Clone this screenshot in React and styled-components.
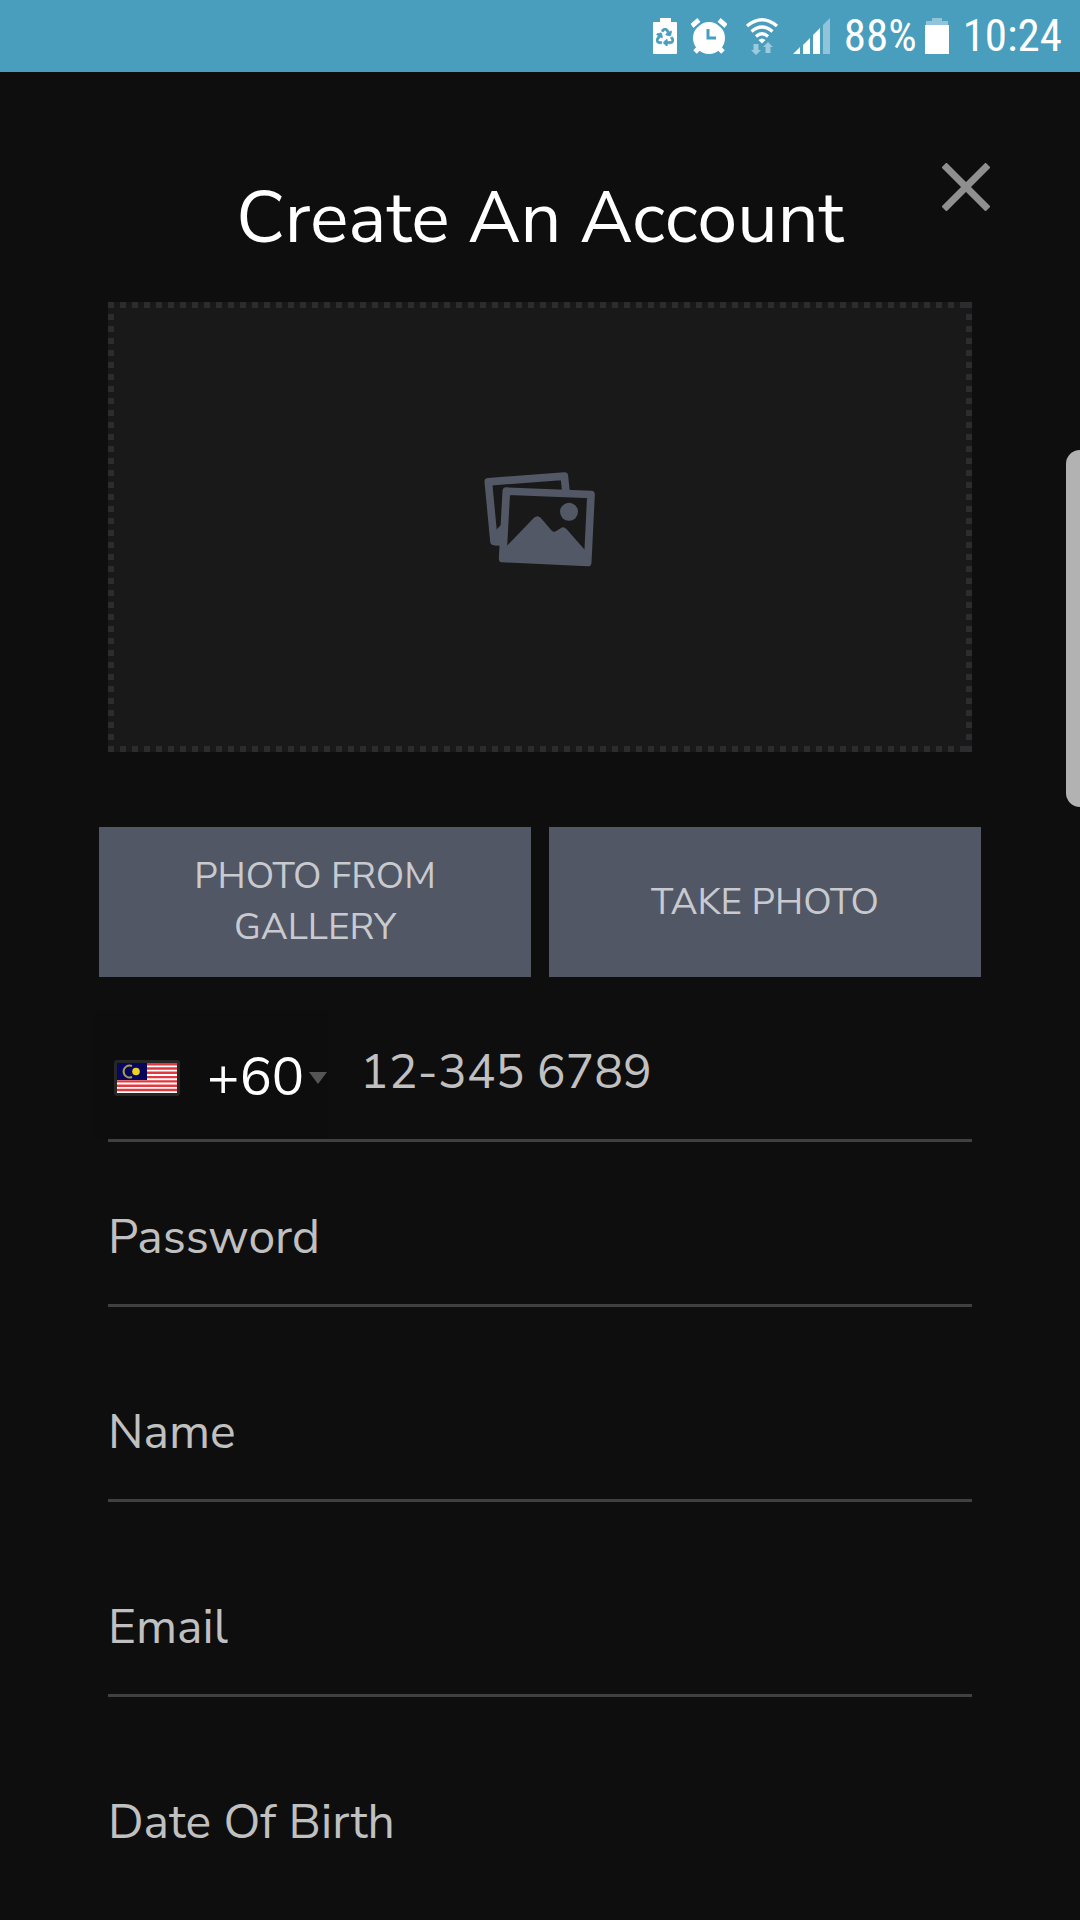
import React from 'react'
import styled, { createGlobalStyle } from 'styled-components';
import { FaRecycle } from 'react-icons/fa';

const GlobalStyle = createGlobalStyle`
    * {
        box-sizing: border-box;
    }
    body {
        margin: 0;
        background: #0e0e0e;
        font-family: 'Nunito Sans', Nunito, Lato, sans-serif;
    }
`
const Screen = styled.div`
    position: relative;
    min-height: 100vh;
    overflow: hidden;
`;
const StatusBar = styled.div`
    display: flex;
    justify-content: flex-end;
    align-items: center;
    gap: 14px;
    height: 72px;
    padding: 0 18px;
    background: #499dbd;
    color: white;
    font-family: 'Roboto Condensed', Roboto, sans-serif;
    font-size: 45px;
    line-height: 76px;
`;
const Level = styled.div`
    display: flex;
    align-items: center;
    gap: 8px;
`;
const Header = styled.header`
    display: grid;
    grid-template-columns: 1fr auto 1fr;
    align-items: start;
    padding: 91px 90px 40px;
`;
const Title = styled.h1`
    grid-column: 2;
    margin: 11px 0 0;
    color: white;
    font-size: 72px;
    font-weight: 400;
    line-height: 88px;
`;
const Close = styled.button`
    display: flex;
    justify-self: end;
    padding: 0;
    border: none;
    background: none;
    color: #8f8f8f;
`;
const Content = styled.form`
    padding: 0 108px;
`;
const Preview = styled.div`
    --dots: #2c2c2e 0 6px, transparent 6px 12px;
    display: flex;
    justify-content: center;
    align-items: center;
    height: 450px;
    padding-bottom: 16px;
    background:
        repeating-linear-gradient(90deg, var(--dots)) top / 100% 6px no-repeat,
        repeating-linear-gradient(90deg, var(--dots)) bottom / 100% 6px no-repeat,
        repeating-linear-gradient(var(--dots)) left / 6px 100% no-repeat,
        repeating-linear-gradient(var(--dots)) right / 6px 100% no-repeat,
        #191919;
`;
const Buttons = styled.div`
    display: grid;
    grid-template-columns: 1fr 1fr;
    gap: 18px;
    margin: 75px -9px 0;
`;
const PhotoButton = styled.button`
    height: 150px;
    padding: 0 72px;
    border: none;
    background: #515764;
    color: #c8cad0;
    font-family: inherit;
    font-size: 37px;
    line-height: 51px;
    text-transform: uppercase;
`;
const Field = styled.div`
    display: flex;
    align-items: flex-end;
    height: ${props => props.$short ? '165px' : '195px'};
    border-bottom: 3px solid ${props => props.$open ? 'transparent' : '#404040'};
`;
const Input = styled.input`
    flex: 1;
    min-width: 0;
    height: 100px;
    padding: 0 0 34px;
    border: none;
    outline: none;
    background: none;
    color: #c0c0c0;
    font-family: inherit;
    font-size: 48px;
    &::placeholder {
        color: #c0c0c0;
        opacity: 1;
    }
`;
const Country = styled.div`
    display: flex;
    align-items: center;
    width: 233px;
    height: 129px;
    margin: 0 32px 0 -13px;
    padding: 6px 0 0 19px;
    background: #0d0d0d;
`;
const Code = styled.select`
    appearance: none;
    width: 102px;
    margin-left: 27px;
    padding: 0 0 2px;
    border: none;
    outline: none;
    background: none;
    color: white;
    font-family: inherit;
    font-size: 54px;
`;
const EdgePanel = styled.div`
    position: absolute;
    top: 450px;
    right: 0;
    width: 14px;
    height: 357px;
    border-radius: 18px 0 0 18px;
    background: #b3b2b2;
`;

function RecycleBattery() {
    return (
        <svg width="24" height="36" viewBox="0 0 24 36">
            <path fill="#fff" d="M7 0h11v4h5q1 0 1 1v30q0 1-1 1H1q-1 0-1-1V5q0-1 1-1h6z" />
            <FaRecycle x="3" y="10" size={18} color="#499dbd" stroke="#499dbd" strokeWidth="20" />
        </svg>
    )
}

function Alarm() {
    return (
        <svg width="36" height="36" viewBox="0 0 36 36">
            <path stroke="#fff" strokeWidth="5" d="M1 8l7-6M28 2l7 6M4 34l6-6M32 34l-6-6" />
            <circle cx="18" cy="20" r="16" fill="#fff" />
            <path stroke="#499dbd" strokeWidth="2" d="M3 11l9-8M33 11l-9-8" />
            <path fill="none" stroke="#499dbd" strokeWidth="3" d="M17 11v9h8" />
        </svg>
    )
}

function Wifi() {
    return (
        <svg width="38" height="37" viewBox="-5 0 38 37">
            <g fill="none" stroke="#fff" strokeWidth="3.2">
                <path d="M1 8Q16-4.500 31 8" />
                <path d="M5.500 13.500Q16 4.500 26.500 13.500" />
                <path d="M10 18.500Q16 13 22 18.500" />
            </g>
            <path fill="#fff" d="M12.500 22q3.500-3 7 0L16 25.500z" />
            <path fill="#9ccbde" d="M7.500 26h5v6H15l-5 5-5-5h2.500zM19.500 35h5v-6H27l-5-5-5 5h2.500z" />
        </svg>
    )
}

function Signal() {
    return (
        <svg width="37" height="36" viewBox="0 0 37 36">
            <path fill="#fff" d="M0 36l7-7v7zM10 27l7-7v16h-7zM20 17l7-7v26h-7z" />
            <path fill="#91c4d8" d="M30 7l7-7v36h-7z" />
        </svg>
    )
}

function Battery() {
    return (
        <svg width="24" height="36" viewBox="0 0 24 36">
            <path fill="#91c4d8" d="M7 0h10v3h6v5H1V3h6z" />
            <path fill="#fff" d="M0 7h24v29H0z" />
        </svg>
    )
}

function Photos() {
    return (
        <svg width="112" height="97" viewBox="72 62 336 290">
            <g fill="none" stroke="#525866" strokeWidth="23" strokeLinejoin="round">
                <path d="M128 273H102L85 94L313 77L318 126" />
                <path d="M139 122L393 132L383 336L128 324z" />
            </g>
            <path fill="#525866" d="M104 243L130 216V285H104zM130 297L222 202Q232 192 242 202L274 239Q282 248 291 240L302 233Q311 227 320 236L386 311V340L128 328z" />
            <circle cx="327" cy="184" r="27" fill="#525866" />
        </svg>
    )
}

function Flag() {
    return (
        <svg width="66" height="36" viewBox="-3 -3 66 36">
            <rect x="-3" y="-3" width="66" height="36" rx="3" fill="#262626" />
            <rect width="60" height="30" fill="#fff" />
            <path stroke="#e03a40" strokeWidth="2.400" d="M0 1.200h60M0 5.500h60M0 9.800h60M0 14.100h60M0 18.400h60M0 22.700h60M0 27h60" />
            <rect width="30" height="17" fill="#06065c" />
            <path fill="none" stroke="#a99a4c" strokeWidth="2" d="M15 3A6 6 0 1 0 15 14" />
            <circle cx="19" cy="8.500" r="3.800" fill="#f0d020" />
        </svg>
    )
}

function App() {
    return (
        <Screen>
            <GlobalStyle />
            <StatusBar>
                <RecycleBattery />
                <Alarm />
                <Wifi />
                <Signal />
                <Level>88%<Battery /></Level>
                <span>10:24</span>
            </StatusBar>
            <Header>
                <Title>Create An Account</Title>
                <Close type="button" aria-label="Close">
                    <svg width="48" height="48" viewBox="0 0 48 48">
                        <path stroke="currentColor" strokeWidth="7" d="M2 2l44 44M46 2L2 46" />
                    </svg>
                </Close>
            </Header>
            <Content>
                <Preview><Photos /></Preview>
                <Buttons>
                    <PhotoButton type="button">Photo from gallery</PhotoButton>
                    <PhotoButton type="button">Take photo</PhotoButton>
                </Buttons>
                <Field $short>
                    <Country>
                        <Flag />
                        <Code name="code" aria-label="Country code">
                            <option>+60</option>
                        </Code>
                        <svg width="18" height="12" viewBox="0 0 18 12">
                            <path fill="#555" d="M0 0h18l-9 12z" />
                        </svg>
                    </Country>
                    <Input type="tel" name="phone" placeholder="12-345 6789" aria-label="Phone" />
                </Field>
                <Field $short>
                    <Input type="password" name="password" placeholder="Password" aria-label="Password" />
                </Field>
                <Field>
                    <Input type="text" name="name" placeholder="Name" aria-label="Name" />
                </Field>
                <Field>
                    <Input type="email" name="email" placeholder="Email" aria-label="Email" />
                </Field>
                <Field $open>
                    <Input type="text" name="birth" placeholder="Date Of Birth" aria-label="Date Of Birth" />
                </Field>
            </Content>
            <EdgePanel />
        </Screen>
    )
}

export default App
